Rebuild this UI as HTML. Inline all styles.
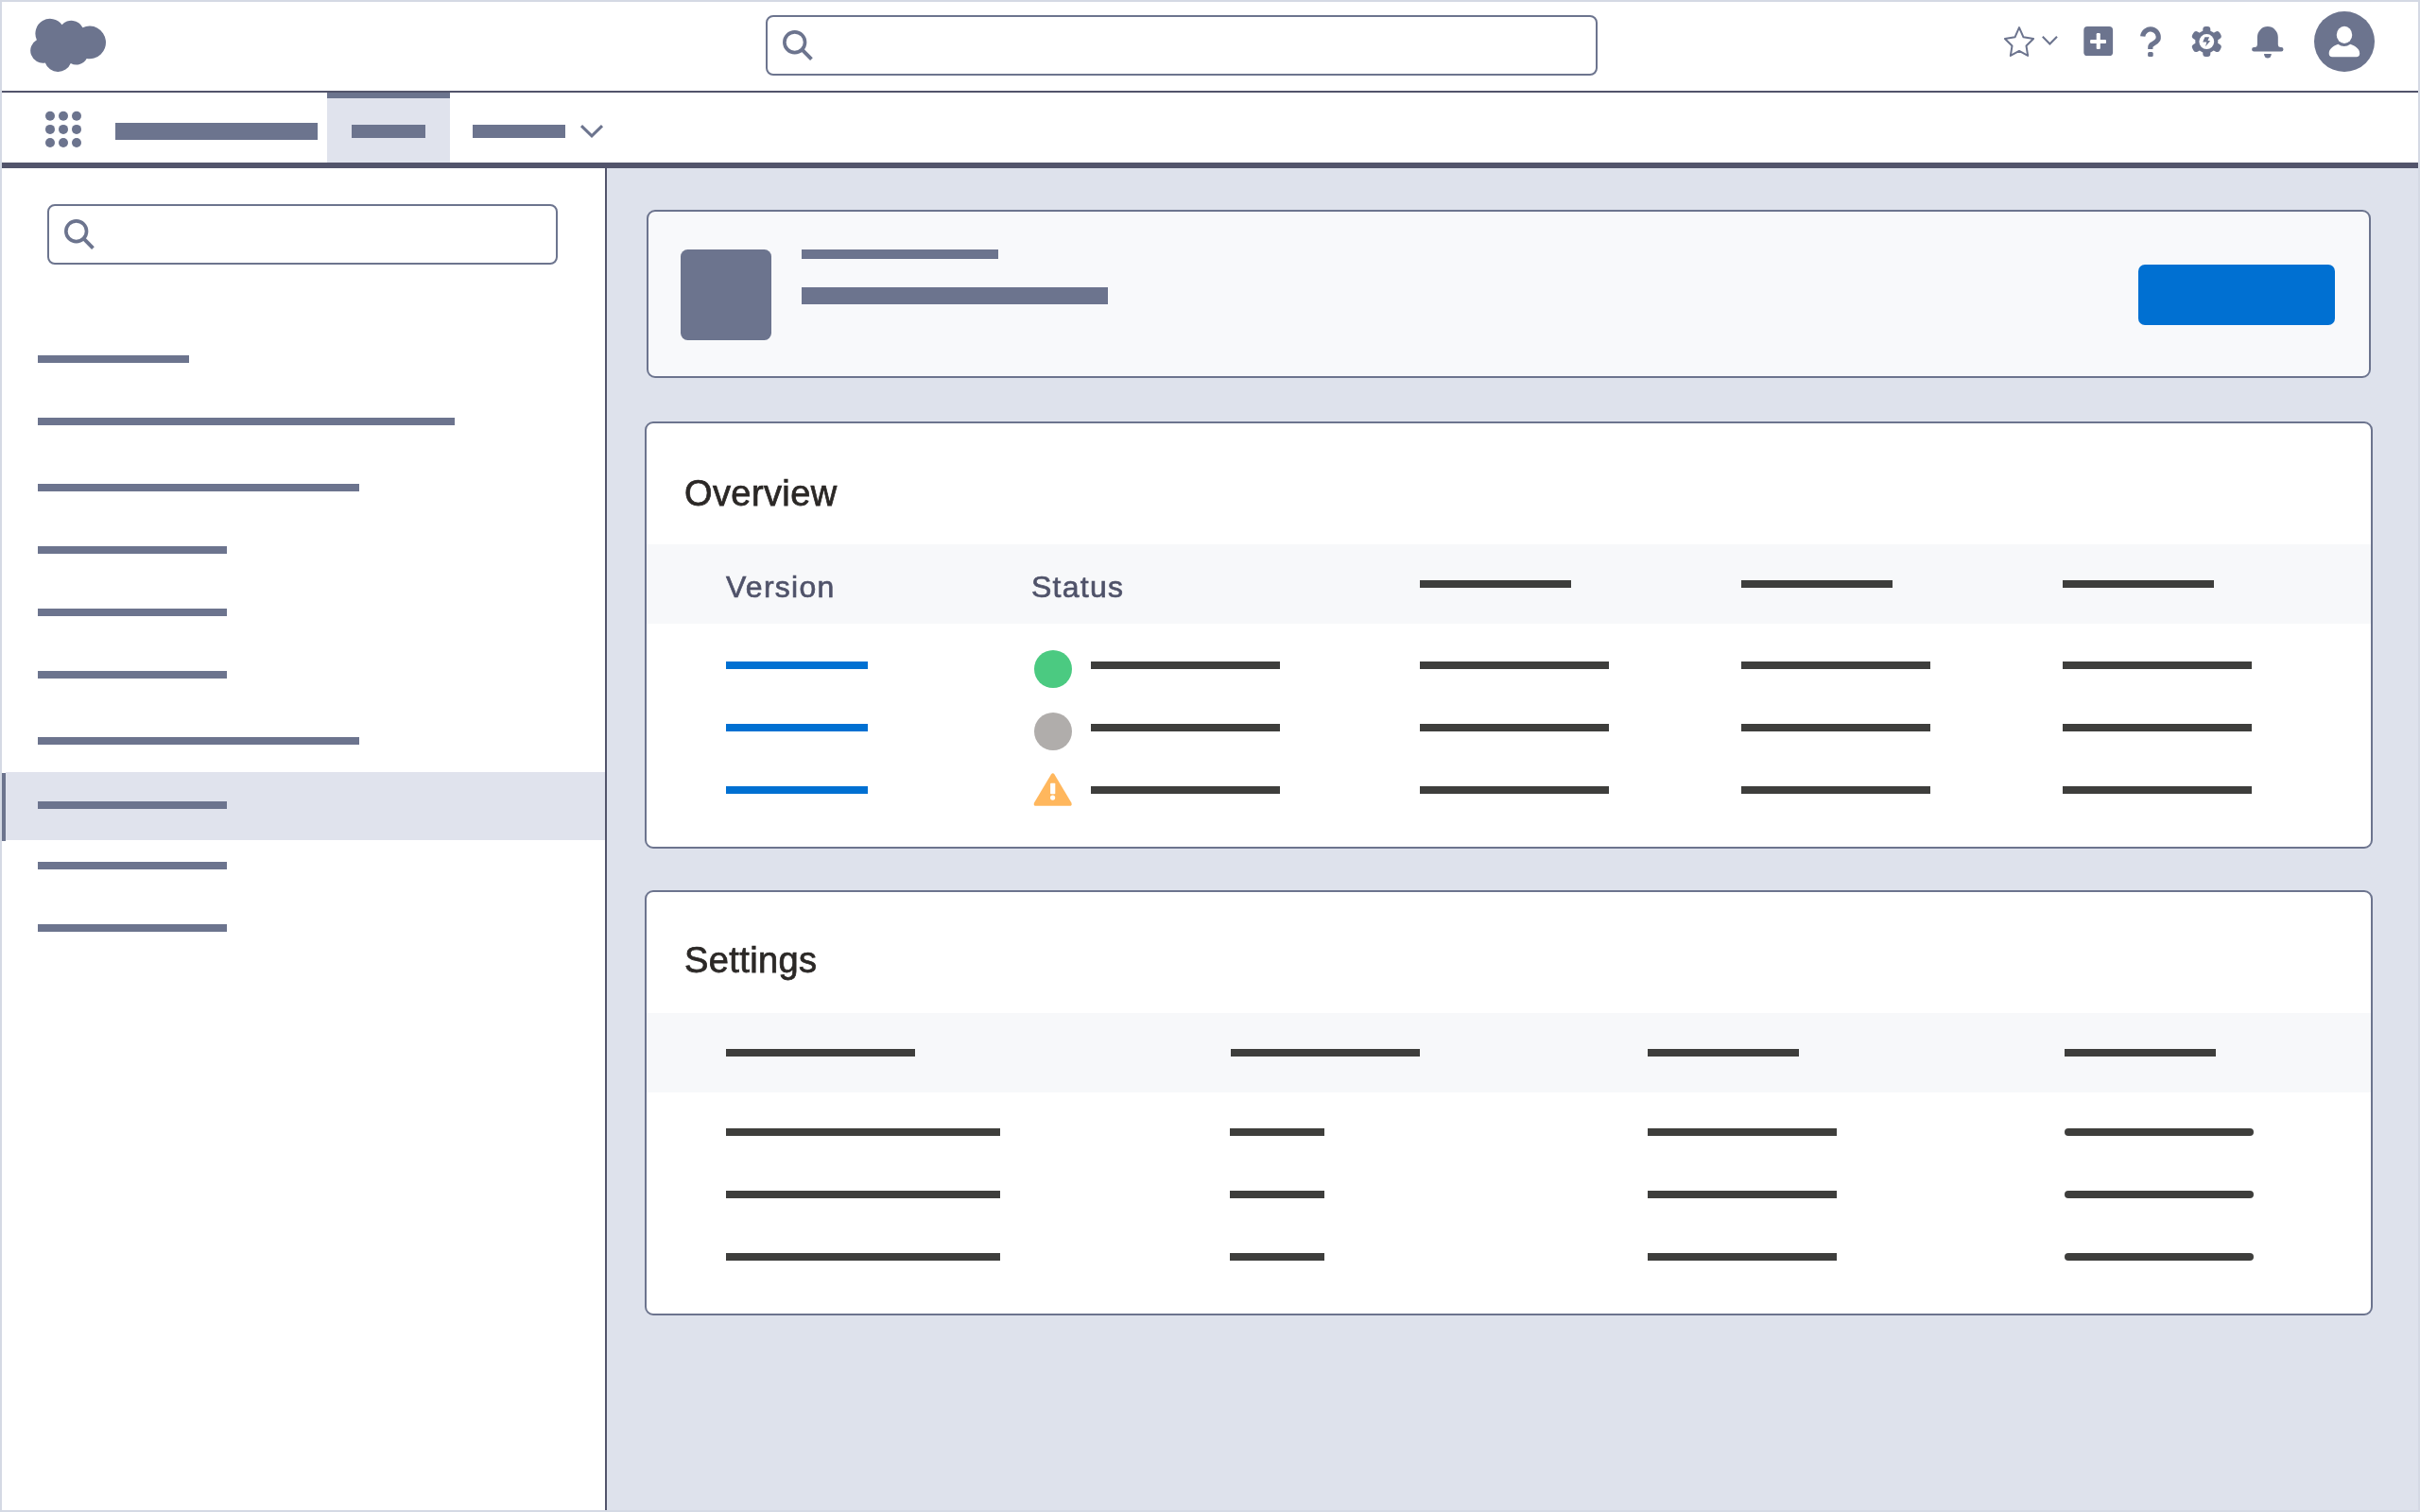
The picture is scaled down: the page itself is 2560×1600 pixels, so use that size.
<!DOCTYPE html>
<html lang="en">
<head>
<meta charset="utf-8">
<title>Setup – Overview</title>
<style>
  html, body { margin: 0; padding: 0; }
  body {
    width: 2560px; height: 1600px; overflow: hidden; position: relative;
    background: #ffffff;
    font-family: "Liberation Sans", sans-serif;
  }
  .abs, .bar, .dk, .bl { position: absolute; }
  .bar { background: #6c748e; }   /* slate placeholder bars */
  .dk  { background: #3e3e3c; height: 8px; }   /* dark text placeholder bars */
  .bl  { background: #0070d2; height: 8px; width: 150px; left: 768px; }   /* link placeholder bars */
  .rnd { border-radius: 4px; }

  #frame { position: absolute; left: 0; top: 0; width: 2556px; height: 1596px; border: 2px solid #d4d9e4; z-index: 50; pointer-events: none; }

  /* global header */
  #hdr-line { left: 0; top: 96px; width: 2560px; height: 2px; background: #52546b; }
  .search { position: absolute; box-sizing: border-box; border: 2px solid #6c748e; border-radius: 8px; background: #fff; }
  .search svg { position: absolute; left: 16px; top: 14px; }

  /* nav */
  #tab-bg  { left: 346px; top: 98px; width: 130px; height: 74px; background: #e0e3ed; }
  #tab-top { left: 346px; top: 98px; width: 130px; height: 6px; background: #6c748e; }
  #nav-line { left: 0; top: 172px; width: 2560px; height: 6px; background: #52546b; }

  /* sidebar */
  #main-bg { left: 642px; top: 178px; width: 1918px; height: 1422px; background: #dee2ec; }
  #side-line { left: 640px; top: 178px; width: 2px; height: 1422px; background: #52546b; }
  #sel-bg { left: 6px; top: 817px; width: 634px; height: 72px; background: #e0e3ed; }
  #sel-ind { left: 2px; top: 818px; width: 4px; height: 72px; background: #6c748e; }

  /* cards */
  .card { position: absolute; box-sizing: border-box; border: 2px solid #6c748e; border-radius: 9px; background: #fff; overflow: hidden; }
  .thead { position: absolute; left: 0; width: 100%; height: 84px; background: #f7f8fa; }
  h2 { position: absolute; margin: 0; font-weight: 400; font-size: 38px; line-height: 44px; color: #2b2826; -webkit-text-stroke: 0.75px #2b2826; white-space: nowrap; letter-spacing: 0.4px; will-change: transform; }
  .th { position: absolute; font-size: 32px; line-height: 40px; color: #4f5269; -webkit-text-stroke: 0.65px #4f5269; white-space: nowrap; letter-spacing: 1.25px; will-change: transform; }
</style>
</head>
<body>

<!-- ======= main background & structural lines ======= -->
<div class="abs" id="main-bg"></div>
<div class="abs" id="hdr-line"></div>
<div class="abs" id="tab-bg"></div>
<div class="abs" id="tab-top"></div>
<div class="abs" id="nav-line"></div>
<div class="abs" id="side-line"></div>

<header>
<!-- ======= global header ======= -->
<!-- logo cloud -->
<svg class="abs" style="left:28px;top:16px" width="88" height="64" viewBox="28 16 88 64" aria-label="Salesforce">
  <path fill="#6c748e" d="M38.90 42.17 A15.6 15.6 0 0 1 65.55 26.23 A13.4 13.4 0 0 1 87.47 29.18 A17.3 17.3 0 1 1 91.69 61.94 A12.4 12.4 0 0 1 74.77 66.96 A14.4 14.4 0 0 1 47.84 66.45 A13.1 13.1 0 0 1 38.90 42.17 Z"/>
</svg>

<!-- global search -->
<div class="search" style="left:810px;top:16px;width:880px;height:64px" role="search">
  <svg style="left:12px;top:10px" width="40" height="40" viewBox="0 0 40 40">
    <circle cx="16.7" cy="16.7" r="10.85" fill="none" stroke="#6c748e" stroke-width="3.65"/>
    <path d="M24.3 24.3 L34.45 34.55" stroke="#6c748e" stroke-width="3.9" fill="none"/>
  </svg>
</div>

<!-- favourites star + chevron -->
<svg class="abs" style="left:2116px;top:24px" width="68" height="40" viewBox="2116 24 68 40">
  <polygon points="2136,29.1 2140.5,39.3 2151.1,40.95 2143.5,48.5 2145.15,58.9 2136,53.9 2126.85,58.9 2128.5,48.5 2120.9,40.95 2131.5,39.3"
           fill="none" stroke="#6c748e" stroke-width="2" stroke-linejoin="round"/>
  <polyline points="2160.8,38.7 2168.4,46.4 2176,38.7" fill="none" stroke="#6c748e" stroke-width="2.1"/>
</svg>

<!-- global actions (+) -->
<svg class="abs" style="left:2200px;top:24px" width="40" height="40" viewBox="2200 24 40 40">
  <rect x="2204.3" y="28.1" width="30.8" height="31" rx="3.9" fill="#6c748e"/>
  <rect x="2211.1" y="41.95" width="16.9" height="4.05" rx="1.1" fill="#fff"/>
  <rect x="2217.7" y="35.1" width="4.1" height="17" rx="1.1" fill="#fff"/>
</svg>

<!-- help (?) -->
<svg class="abs" style="left:2260px;top:24px" width="32" height="40" viewBox="2260 24 32 40">
  <path d="M2266.68 38.48 A8.3 8.3 0 1 1 2282.75 42.04 C2281.4 44.5 2279 45.6 2277.2 46.6 C2275.4 47.5 2274.8 48.6 2274.8 50.2 L2274.8 52.1" fill="none" stroke="#6c748e" stroke-width="5.25" stroke-linejoin="round"/>
  <rect x="2272.1" y="54.9" width="5.6" height="5.2" rx="1.5" fill="#6c748e"/>
</svg>

<!-- setup gear -->
<svg class="abs" style="left:2314px;top:24px" width="40" height="40" viewBox="2314 24 40 40">
  <g fill="#6c748e" transform="translate(2334.3 44.05)">
    <circle r="12"/>
    <rect x="-4" y="-16.05" width="8" height="9" rx="3"/>
    <rect x="-4" y="-16.05" width="8" height="9" rx="3" transform="rotate(180)"/>
    <rect x="-4.4" y="-16.7" width="8.8" height="9" rx="3.5" transform="rotate(60)"/>
    <rect x="-4.4" y="-16.7" width="8.8" height="9" rx="3.5" transform="rotate(120)"/>
    <rect x="-4.4" y="-16.7" width="8.8" height="9" rx="3.5" transform="rotate(240)"/>
    <rect x="-4.4" y="-16.7" width="8.8" height="9" rx="3.5" transform="rotate(300)"/>
    <circle r="7.93" fill="#fff"/>
    <polygon points="-1.9,-4.9 2.8,-4.9 1.2,-1.1 3.9,-0.9 -1.3,5.1 0,0.5 -4.1,0.5"/>
  </g>
</svg>

<!-- notifications bell -->
<svg class="abs" style="left:2378px;top:24px" width="42" height="42" viewBox="2378 24 42 42">
  <path fill="#6c748e" d="M2384.4 54.6 A2.3 2.3 0 0 1 2384.4 50 L2385.5 50 Q2387.9 49.7 2387.9 47.2 L2387.9 39.3 A10.95 11.2 0 0 1 2409.8 39.3 L2409.8 47.2 Q2409.8 49.7 2412.2 50 L2413.2 50 A2.3 2.3 0 0 1 2413.2 54.6 Z"/>
  <path fill="#6c748e" d="M2395 57 L2402.8 57 A3.9 4.55 0 0 1 2395 57 Z"/>
</svg>

<!-- user avatar -->
<svg class="abs" style="left:2444px;top:8px" width="72" height="72" viewBox="2444 8 72 72">
  <circle cx="2480" cy="44" r="32" fill="#6c748e"/>
  <ellipse cx="2480" cy="36.9" rx="8.25" ry="9.1" fill="#fff"/>
  <path fill="#fff" d="M2473.3 46.8 Q2479.8 51.2 2486.3 46.8 C2491.2 48.6 2496.2 51.6 2496.2 56.4 Q2496.2 60.2 2492.6 60.2 L2467.2 60.2 Q2463.7 60.2 2463.7 56.4 C2463.7 51.6 2468.6 48.6 2473.3 46.8 Z"/>
</svg>


</header>

<nav>
<!-- ======= app navigation ======= -->
<svg class="abs" style="left:44px;top:114px" width="46" height="46" viewBox="44 114 46 46" aria-label="App launcher">
  <g fill="#6c748e">
    <circle cx="53" cy="122.8" r="5"/><circle cx="67" cy="122.8" r="5"/><circle cx="81" cy="122.8" r="5"/>
    <circle cx="53" cy="136.9" r="5"/><circle cx="67" cy="136.9" r="5"/><circle cx="81" cy="136.9" r="5"/>
    <circle cx="53" cy="151" r="5"/><circle cx="67" cy="151" r="5"/><circle cx="81" cy="151" r="5"/>
  </g>
</svg>
<div class="bar" style="left:122px;top:130px;width:214px;height:18px"></div>
<div class="bar" style="left:372px;top:132px;width:78px;height:14px"></div>
<div class="bar" style="left:500px;top:132px;width:98px;height:14px"></div>
<svg class="abs" style="left:610px;top:128px" width="32" height="22" viewBox="610 128 32 22">
  <polyline points="615,133.2 626,143.9 637,133.2" fill="none" stroke="#6c748e" stroke-width="3"/>
</svg>


</nav>

<aside>
<!-- ======= setup sidebar ======= -->
<div class="search" style="left:50px;top:216px;width:540px;height:64px">
  <svg style="left:12px;top:10px" width="40" height="40" viewBox="0 0 40 40">
    <circle cx="16.7" cy="16.7" r="10.85" fill="none" stroke="#6c748e" stroke-width="3.65"/>
    <path d="M24.3 24.3 L34.45 34.55" stroke="#6c748e" stroke-width="3.9" fill="none"/>
  </svg>
</div>
<div class="abs" id="sel-bg"></div>
<div class="abs" id="sel-ind"></div>
<div class="bar" style="left:40px;top:376px;width:160px;height:8px"></div>
<div class="bar" style="left:40px;top:442px;width:441px;height:8px"></div>
<div class="bar" style="left:40px;top:512px;width:340px;height:8px"></div>
<div class="bar" style="left:40px;top:578px;width:200px;height:8px"></div>
<div class="bar" style="left:40px;top:644px;width:200px;height:8px"></div>
<div class="bar" style="left:40px;top:710px;width:200px;height:8px"></div>
<div class="bar" style="left:40px;top:780px;width:340px;height:8px"></div>
<div class="bar" style="left:40px;top:848px;width:200px;height:8px"></div>
<div class="bar" style="left:40px;top:912px;width:200px;height:8px"></div>
<div class="bar" style="left:40px;top:978px;width:200px;height:8px"></div>


</aside>

<main>
<!-- ======= page header card ======= -->
<div class="card" style="left:684px;top:222px;width:1824px;height:178px;background:#f8f9fb"></div>
<div class="bar" style="left:720px;top:264px;width:96px;height:96px;border-radius:7.5px"></div>
<div class="bar" style="left:848px;top:264px;width:208px;height:10px"></div>
<div class="bar" style="left:848px;top:304px;width:324px;height:18px"></div>
<div class="abs" style="left:2262px;top:280px;width:208px;height:64px;border-radius:7px;background:#0070d2"></div>

<!-- ======= Overview card ======= -->
<div class="card" style="left:682px;top:446px;width:1828px;height:452px"></div>
<h2 style="left:723.5px;top:500px">Overview</h2>
<div class="abs" style="left:684px;top:576px;width:1824px;height:84px;background:#f7f8fa"></div>
<div class="th" style="left:768px;top:601px">Version</div>
<div class="th" style="left:1091px;top:601px">Status</div>
<div class="dk" style="left:1502px;top:614px;width:160px"></div>
<div class="dk" style="left:1842px;top:614px;width:160px"></div>
<div class="dk" style="left:2182px;top:614px;width:160px"></div>

<div class="bl" style="top:700px"></div>
<div class="abs" style="left:1094px;top:688px;width:40px;height:40px;border-radius:50%;background:#4bca81"></div>
<div class="dk" style="left:1154px;top:700px;width:200px"></div>
<div class="dk" style="left:1502px;top:700px;width:200px"></div>
<div class="dk" style="left:1842px;top:700px;width:200px"></div>
<div class="dk" style="left:2182px;top:700px;width:200px"></div>

<div class="bl" style="top:766px"></div>
<div class="abs" style="left:1094px;top:754px;width:40px;height:40px;border-radius:50%;background:#b0adab"></div>
<div class="dk" style="left:1154px;top:766px;width:200px"></div>
<div class="dk" style="left:1502px;top:766px;width:200px"></div>
<div class="dk" style="left:1842px;top:766px;width:200px"></div>
<div class="dk" style="left:2182px;top:766px;width:200px"></div>

<div class="bl" style="top:832px"></div>
<svg class="abs" style="left:1090px;top:814px" width="48" height="44" viewBox="1090 814 48 44" aria-label="Warning">
  <path fill="#ffb75d" d="M1111.9 819.5 Q1113.7 817.2 1115.5 819.5 L1133.4 849.4 Q1134.6 852.8 1131.4 852.8 L1096 852.8 Q1092.8 852.8 1094 849.4 Z"/>
  <rect x="1111.1" y="828.8" width="5.2" height="11.5" rx="0.8" fill="#fff"/>
  <circle cx="1113.6" cy="844.1" r="2.6" fill="#fff"/>
</svg>
<div class="dk" style="left:1154px;top:832px;width:200px"></div>
<div class="dk" style="left:1502px;top:832px;width:200px"></div>
<div class="dk" style="left:1842px;top:832px;width:200px"></div>
<div class="dk" style="left:2182px;top:832px;width:200px"></div>

<!-- ======= Settings card ======= -->
<div class="card" style="left:682px;top:942px;width:1828px;height:450px"></div>
<h2 style="left:723.5px;top:994px">Settings</h2>
<div class="abs" style="left:684px;top:1072px;width:1824px;height:84px;background:#f7f8fa"></div>
<div class="dk" style="left:768px;top:1110px;width:200px"></div>
<div class="dk" style="left:1302px;top:1110px;width:200px"></div>
<div class="dk" style="left:1743px;top:1110px;width:160px"></div>
<div class="dk" style="left:2184px;top:1110px;width:160px"></div>

<div class="dk" style="left:768px;top:1194px;width:290px"></div>
<div class="dk" style="left:1301px;top:1194px;width:100px"></div>
<div class="dk" style="left:1743px;top:1194px;width:200px"></div>
<div class="dk rnd" style="left:2184px;top:1194px;width:200px"></div>

<div class="dk" style="left:768px;top:1260px;width:290px"></div>
<div class="dk" style="left:1301px;top:1260px;width:100px"></div>
<div class="dk" style="left:1743px;top:1260px;width:200px"></div>
<div class="dk rnd" style="left:2184px;top:1260px;width:200px"></div>

<div class="dk" style="left:768px;top:1326px;width:290px"></div>
<div class="dk" style="left:1301px;top:1326px;width:100px"></div>
<div class="dk" style="left:1743px;top:1326px;width:200px"></div>
<div class="dk rnd" style="left:2184px;top:1326px;width:200px"></div>


</main>

<div id="frame"></div>
</body>
</html>
